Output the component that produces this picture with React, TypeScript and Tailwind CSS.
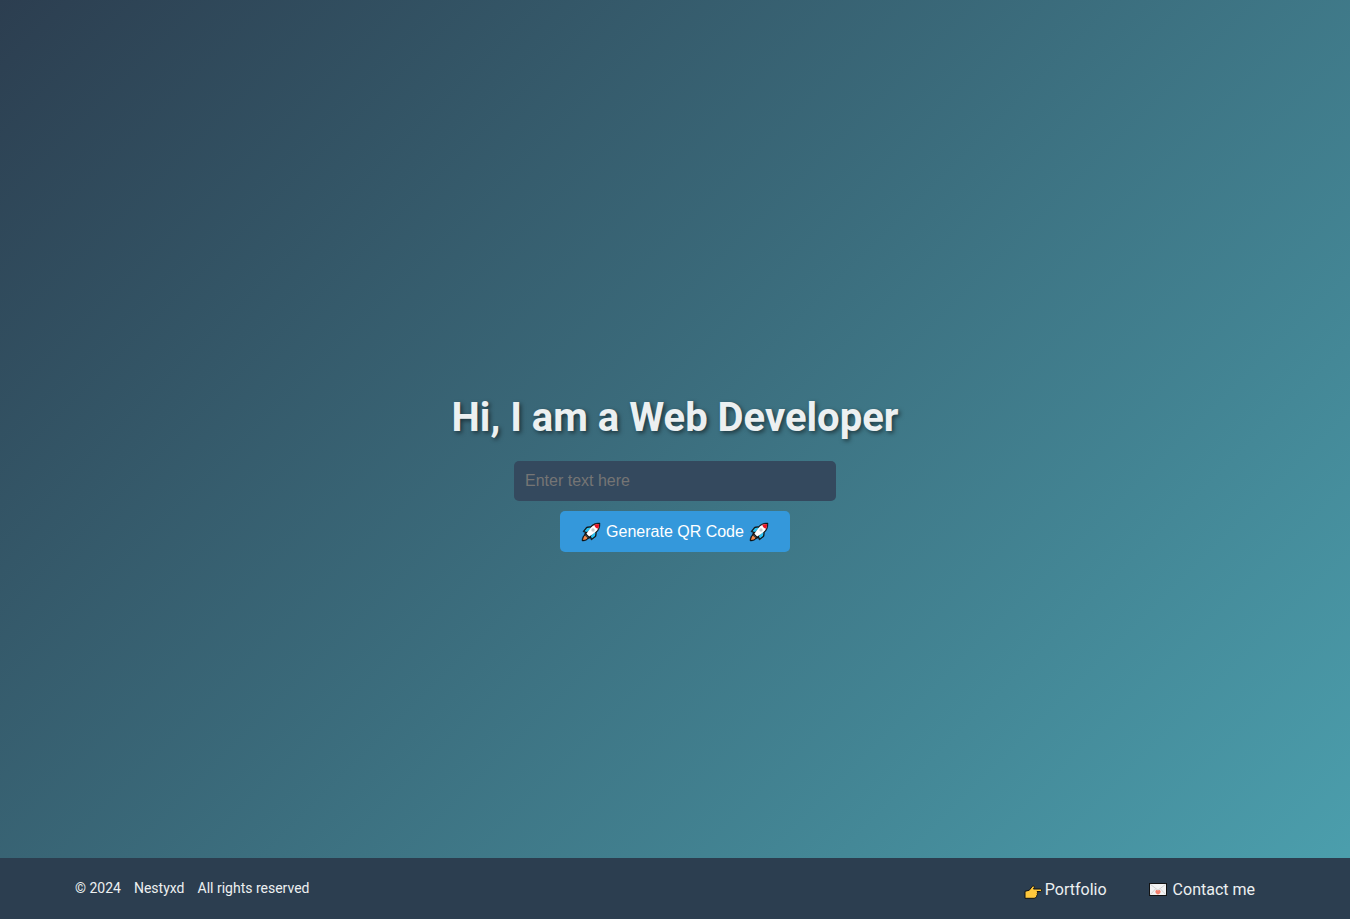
function Rocket() {
  return (
    <svg viewBox="0 0 20 20" className="h-5 w-5 shrink-0" aria-hidden="true">
      <path
        d="M18.9 1.1C14.8 1 11.9 2 9.600 4.600L5.600 5 2 9.600l2.300.9-1.100 2.700C1.700 14.500 1.100 16.600 1.100 18.900c2.400 0 4.500-.6 5.600-2l2.700-1.200.9 2.300 4.700-3.600.4-4C18 8.100 19 5.200 18.900 1.100Z"
        fill="#111"
        stroke="#111"
        strokeWidth=".6"
        strokeLinejoin="round"
      />
      <path d="M9.300 5.500 6.100 6 3.400 9.200l2.700.900 4-3.600Z" fill="#28c0f0" />
      <path d="m14.500 10.700-.5 3.200-3.200 2.700-.9-2.700 3.600-4Z" fill="#28c0f0" />
      <path d="M18.100 1.900c-3.600.1-6 1.100-8.100 3.600-1.800 2.100-3.300 4.200-4.600 6.300l2.800 2.800c2.100-1.300 4.200-2.800 6.300-4.600 2.500-2.100 3.500-4.500 3.600-8.100Z" fill="#fff" />
      <path d="M18.100 1.900c-1.900 0-3.500.3-4.900.9.500 2.200 1.800 3.500 4 4 .6-1.400.9-3 .9-4.900Z" fill="#e81224" />
      <circle cx="12" cy="8" r="1.700" fill="#c8c8c8" />
      <path d="m4.200 13.400 2.400 2.400c-.9 1.500-2.300 2.200-4.500 2.300.1-2.200.7-3.700 2.100-4.700Z" fill="#f7894a" />
      <path d="m4.800 12.200 3 3-1.200.9-2.700-2.700Z" fill="#444" />
    </svg>
  );
}

function PointingHand() {
  return (
    <svg viewBox="0 0 18 14" className="mt-1 h-[14px] w-[18px] shrink-0" aria-hidden="true">
      <path
        d="M1 6.300 5.300 5.200 8.300 1.300c1-.9 2.500 0 2 1.200L9.500 4h6.900c1.700 0 1.700 2.500 0 2.500h-3.500c1 .5 1 1.700.2 2.200.5.700.3 1.500-.4 1.900.2.800-.2 1.400-.9 1.700-.300.700-.800 1-1.800 1H1Z"
        fill="#ffc83d"
        stroke="#111"
        strokeWidth="1"
        strokeLinejoin="round"
      />
    </svg>
  );
}

function LoveLetter() {
  return (
    <svg viewBox="0 0 18 13" className="h-[13px] w-[18px] shrink-0" aria-hidden="true">
      <rect x=".5" y=".5" width="17" height="12" fill="#f2f2f2" stroke="#111" />
      <path d="m1.200 1.200 7.800 6 7.800-6M1.200 11.800l5.600-6.200M16.800 11.800l-5.600-6.200" fill="none" stroke="#cfcfcf" strokeWidth=".9" />
      <path d="M9 11.500C7.300 10.800 6.300 9.800 6.400 8.500c.1-1.600 1.900-2 2.600-.9.700-1.100 2.500-.7 2.600.9.100 1.300-.9 2.300-2.600 3Z" fill="#f37e6c" />
    </svg>
  );
}

export default function App() {
  return (
    <div className="flex min-h-screen flex-col bg-[linear-gradient(135deg,#2c3e50,#4ca1af)] font-['Roboto',sans-serif] text-[#ecf0f1]">
      <main className="flex flex-1 flex-col items-center justify-center px-5 pt-[88px]">
        <h1 className="mb-5 text-center text-[40px] leading-[47px] font-bold [text-shadow:2px_2px_4px_rgba(0,0,0,0.5)]">
          Hi, I am a Web Developer
        </h1>
        <form
          className="flex w-full flex-col items-center gap-[10px] font-['Liberation_Sans',sans-serif] text-base"
          onSubmit={(event) => event.preventDefault()}
        >
          <input
            type="text"
            aria-label="Text for the QR code"
            placeholder="Enter text here"
            className="h-10 w-full max-w-[322px] rounded-[5px] bg-[#34495e] px-[11px] placeholder:text-[#757575]"
          />
          <button
            type="submit"
            className="flex h-[41px] cursor-pointer items-center gap-[5px] rounded-[5px] bg-[#3498db] px-[21px] pt-px text-white"
          >
            <Rocket />
            <span>Generate QR Code</span>
            <Rocket />
          </button>
        </form>
      </main>
      <footer className="bg-[#2c3e50]">
        <div className="mx-auto flex min-h-[61px] max-w-[1200px] flex-wrap items-center justify-between">
          <p className="flex gap-[13px] pb-0.5 text-sm">
            <span>© 2024</span>
            <span>Nestyxd</span>
            <span>All rights reserved</span>
          </p>
          <nav className="flex gap-[42px] pt-0.5 pr-5 text-base">
            <a href="#portfolio" className="flex items-center gap-[3px]">
              <PointingHand />
              Portfolio
            </a>
            <a href="#contact" className="flex items-center gap-[6px]">
              <LoveLetter />
              Contact me
            </a>
          </nav>
        </div>
      </footer>
    </div>
  );
}
